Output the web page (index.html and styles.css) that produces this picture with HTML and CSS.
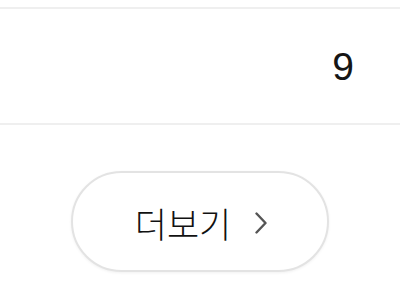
FILE: index.html
```html
<!DOCTYPE html>
<html lang="ko">
<head>
<meta charset="utf-8">
<link rel="stylesheet" href="styles.css">
</head>
<body>
<div class="page">
  <div class="row">
    <span class="count">9</span>
  </div>
  <div class="more-wrap">
    <button class="more-btn" type="button">
      <span class="more-label">더보기</span>
      <svg class="chev" width="12" height="22" viewBox="0 0 12 22" aria-hidden="true">
        <path d="M1.5 1.5 L10.5 11 L1.5 20.5" fill="none" stroke="#555" stroke-width="2.4" stroke-linecap="round" stroke-linejoin="round"/>
      </svg>
    </button>
  </div>
</div>
</body>
</html>
```
FILE: styles.css
```css
html, body {
  margin: 0;
  padding: 0;
  background: #ffffff;
}
.page {
  width: 400px;
  height: 300px;
  padding-top: 7px;
  box-sizing: border-box;
  overflow: hidden;
}
.row {
  height: 114px;
  border-top: 2px solid #efefef;
  border-bottom: 2px solid #efefef;
  display: flex;
  align-items: center;
  justify-content: flex-end;
  padding-right: 46px;
}
.count {
  font-family: "Liberation Sans", Arial, sans-serif;
  font-size: 39px;
  color: #151515;
  line-height: 1;
  margin-top: 1px;
}
.more-wrap {
  display: flex;
  justify-content: center;
  padding-top: 46px;
}
.more-btn {
  width: 258px;
  height: 101px;
  border: 2px solid #e3e3e3;
  border-radius: 51px;
  background: #ffffff;
  box-shadow: 0 1px 3px rgba(0, 0, 0, 0.06);
  display: flex;
  align-items: center;
  justify-content: center;
  gap: 24px;
  padding: 0 0 0 2px;
  box-sizing: border-box;
  cursor: pointer;
}
.more-label {
  font-family: "Noto Sans CJK KR", "Noto Sans", sans-serif;
  font-size: 35px;
  font-weight: 300;
  color: #111111;
  line-height: 1;
  margin-top: 2px;
}
.chev {
  display: block;
  margin-top: 2px;
}
```
